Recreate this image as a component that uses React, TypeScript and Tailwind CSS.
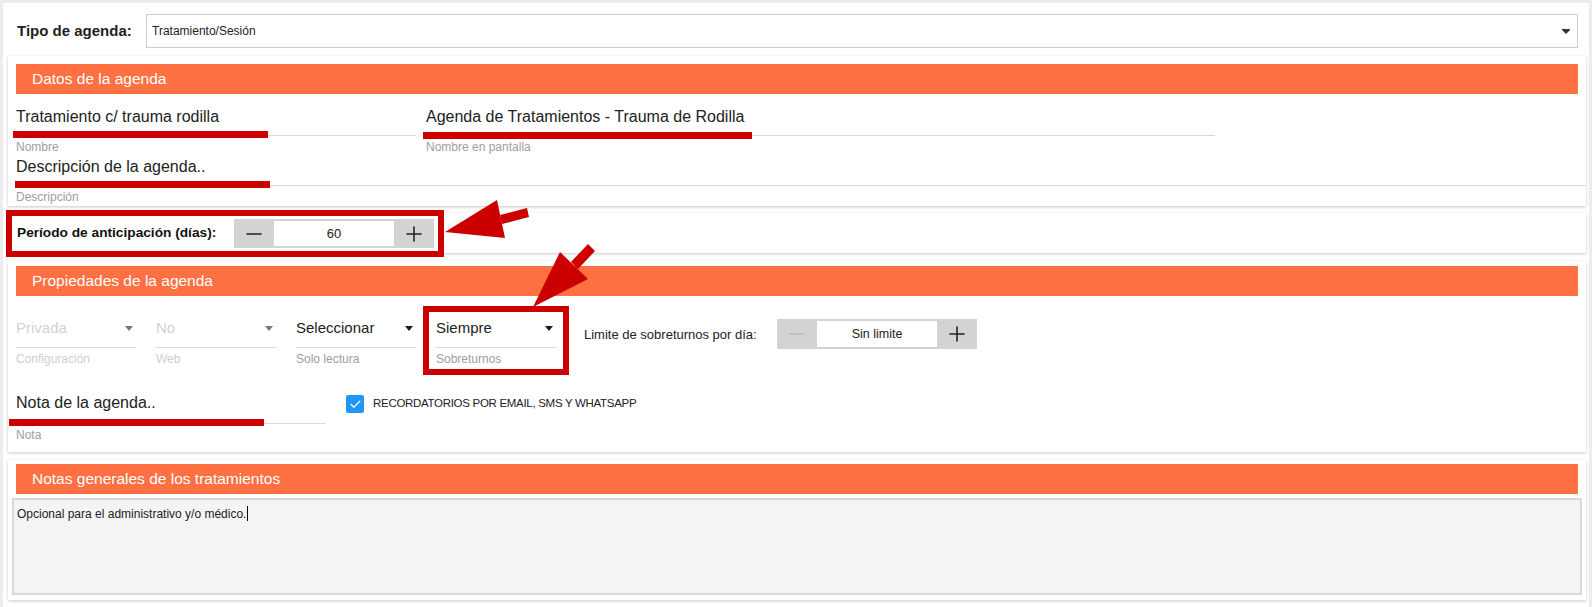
import { Minus, Plus, Check } from 'lucide-react';

function SectionHeader({ title }: { title: string }) {
  return (
    <div className="flex h-[30px] items-center bg-[#ff7043] pl-4 text-[15.5px] text-white">
      {title}
    </div>
  );
}

function Caret({ color }: { color: string }) {
  return <span className={`inline-block h-0 w-0 border-x-[4.5px] border-t-[5px] border-x-transparent ${color}`} />;
}

interface SelectFieldProps {
  value: string;
  label: string;
  disabled?: boolean;
}

function SelectField({ value, label, disabled }: SelectFieldProps) {
  return (
    <div className="w-[120px]">
      <div className="flex items-center justify-between border-b border-[#dcdcdc] pb-[9px] pr-[3px]">
        <span className={`text-[15px] leading-[20px] ${disabled ? 'text-[#d2d2d2]' : 'text-[#222]'}`}>{value}</span>
        <Caret color={disabled ? 'border-t-[#777]' : 'border-t-[#1a1a1a]'} />
      </div>
      <div className={`mt-1 text-[12px] leading-[14px] ${disabled ? 'text-[#cfcfcf]' : 'text-[#9e9e9e]'}`}>{label}</div>
    </div>
  );
}

interface StepperProps {
  value: string;
  height: string;
  minusDisabled?: boolean;
  textSize: string;
}

function Stepper({ value, height, minusDisabled, textSize }: StepperProps) {
  return (
    <div className={`flex w-[200px] bg-[#d3d3d3] py-[2px] ${height}`}>
      <button className="flex w-10 items-center justify-center">
        <Minus size={24} strokeWidth={1.6} className={minusDisabled ? 'text-[#bdbdbd]' : 'text-[#222]'} />
      </button>
      <div className={`flex flex-1 items-center justify-center bg-white text-[#222] ${textSize}`}>{value}</div>
      <button className="flex w-10 items-center justify-center">
        <Plus size={24} strokeWidth={1.6} className="text-[#222]" />
      </button>
    </div>
  );
}

function Annotations() {
  const red = '#cc0000';
  return (
    <svg className="pointer-events-none absolute left-0 top-0" width={1592} height={607}>
      {/* underlines */}
      <rect x={13} y={131} width={255} height={7} fill={red} />
      <rect x={423} y={132} width={329} height={7} fill={red} />
      <rect x={15} y={181} width={255} height={7} fill={red} />
      <rect x={9} y={419} width={255} height={7} fill={red} />
      {/* boxes */}
      <rect x={9} y={213} width={432} height={41} fill="none" stroke={red} strokeWidth={6} />
      <rect x={426} y={309} width={140} height={63} fill="none" stroke={red} strokeWidth={6} />
      {/* arrow to period stepper */}
      <polygon points="445,232 497,200 505,238" fill={red} />
      <polygon points="500,215 527,208 529,217 502,224" fill={red} />
      {/* arrow to sobreturnos */}
      <polygon points="533,307 560,252 588,279" fill={red} />
      <polygon points="571,262 588,244 595,251 578,269" fill={red} />
    </svg>
  );
}

export default function App() {
  return (
    <div className="relative min-h-screen bg-[#ececec] px-[3px] pt-[3px] font-['Liberation_Sans',Arial,sans-serif]">
      <div className="min-h-[604px] bg-white pb-2 pl-[5px] pr-[3px]">
        {/* Tipo de agenda */}
        <div className="flex items-center pt-[11px]">
          <div className="w-[138px] pl-[9px] text-[15px] font-bold text-[#222]">Tipo de agenda:</div>
          <div className="mr-2 flex h-[34px] flex-1 items-center justify-between border border-[#cdcdcd] pl-[5px] pr-[7px]">
            <span className="text-[12px] text-[#222]">Tratamiento/Sesión</span>
            <span className="flex flex-col items-center">
              <span className="h-[1px] w-[8px] bg-[#333]" />
              <span className="h-0 w-0 border-x-4 border-t-[4px] border-x-transparent border-t-[#333]" />
            </span>
          </div>
        </div>

        {/* Datos de la agenda */}
        <div className="mt-2 bg-white px-2 pb-[2px] pt-2 shadow-[0_1px_3px_rgba(0,0,0,0.22)]">
          <SectionHeader title="Datos de la agenda" />
          <div className="mt-[13px] flex">
            <div className="w-[400px]">
              <div className="border-b border-[#d8d8d8] pb-2 text-[16px] leading-[20px] text-[#222]">
                Tratamiento c/ trauma rodilla
              </div>
              <div className="mt-1 text-[12px] leading-[14px] text-[#9e9e9e]">Nombre</div>
            </div>
            <div className="ml-[10px] w-[789px]">
              <div className="border-b border-[#d8d8d8] pb-2 text-[16px] leading-[20px] text-[#222]">
                Agenda de Tratamientos - Trauma de Rodilla
              </div>
              <div className="mt-1 text-[12px] leading-[14px] text-[#9e9e9e]">Nombre en pantalla</div>
            </div>
          </div>
          <div className="-mr-2 mt-[3px]">
            <div className="border-b border-[#d8d8d8] pb-2 text-[16px] leading-[20px] text-[#222]">
              Descripción de la agenda..
            </div>
            <div className="mt-1 text-[12px] leading-[14px] text-[#9e9e9e]">Descripción</div>
          </div>
        </div>

        {/* Período de anticipación */}
        <div className="mt-[7px] flex items-center bg-white pb-[5px] pt-[6px] shadow-[0_1px_3px_rgba(0,0,0,0.22)]">
          <div className="w-[226px] pl-[9px] text-[13.7px] font-bold text-[#111]">Período de anticipación (días):</div>
          <Stepper value="60" height="h-[29px]" textSize="text-[13px]" />
        </div>

        {/* Propiedades de la agenda */}
        <div className="mt-2 bg-white px-2 pb-[10px] pt-[5px] shadow-[0_1px_3px_rgba(0,0,0,0.22)]">
          <SectionHeader title="Propiedades de la agenda" />
          <div className="mt-[22px] flex items-start">
            <div className="flex gap-5">
              <SelectField value="Privada" label="Configuración" disabled />
              <SelectField value="No" label="Web" disabled />
              <SelectField value="Seleccionar" label="Solo lectura" />
              <SelectField value="Siempre" label="Sobreturnos" />
            </div>
            <div className="ml-[28px] mt-[9px] w-[193px] text-[13px] leading-[16px] text-[#222]">
              Limite de sobreturnos por día:
            </div>
            <div className="mt-[1px]">
              <Stepper value="Sin limite" height="h-[30px]" minusDisabled textSize="text-[12.5px]" />
            </div>
          </div>
          <div className="mt-[27px] flex items-start">
            <div className="w-[310px]">
              <div className="border-b border-[#d8d8d8] pb-[10px] text-[16px] leading-[20px] text-[#222]">
                Nota de la agenda..
              </div>
              <div className="mt-1 text-[12px] leading-[14px] text-[#9e9e9e]">Nota</div>
            </div>
            <label className="ml-5 mt-[2px] flex items-center">
              <span className="flex h-[18px] w-[18px] items-center justify-center rounded-[2px] bg-[#2196f3]">
                <Check size={13} strokeWidth={2.2} className="text-white" />
              </span>
              <span className="ml-[9px] text-[11.5px] tracking-[-0.3px] text-[#222]">
                RECORDATORIOS POR EMAIL, SMS Y WHATSAPP
              </span>
            </label>
          </div>
        </div>

        {/* Notas generales */}
        <div className="mt-2 bg-white px-1 pb-[5px] pt-1 shadow-[0_1px_3px_rgba(0,0,0,0.22)]">
          <div className="mx-1">
            <SectionHeader title="Notas generales de los tratamientos" />
          </div>
          <div className="mt-1 h-[97px] border-2 border-[#d9d9d9] bg-[#f4f4f4] px-[3px] pt-[3px] text-[12px] text-[#222]">
            Opcional para el administrativo y/o médico.
            <span className="ml-[1px] inline-block h-[15px] translate-y-[3px] border-l border-black" />
          </div>
        </div>
      </div>
      <Annotations />
    </div>
  );
}
